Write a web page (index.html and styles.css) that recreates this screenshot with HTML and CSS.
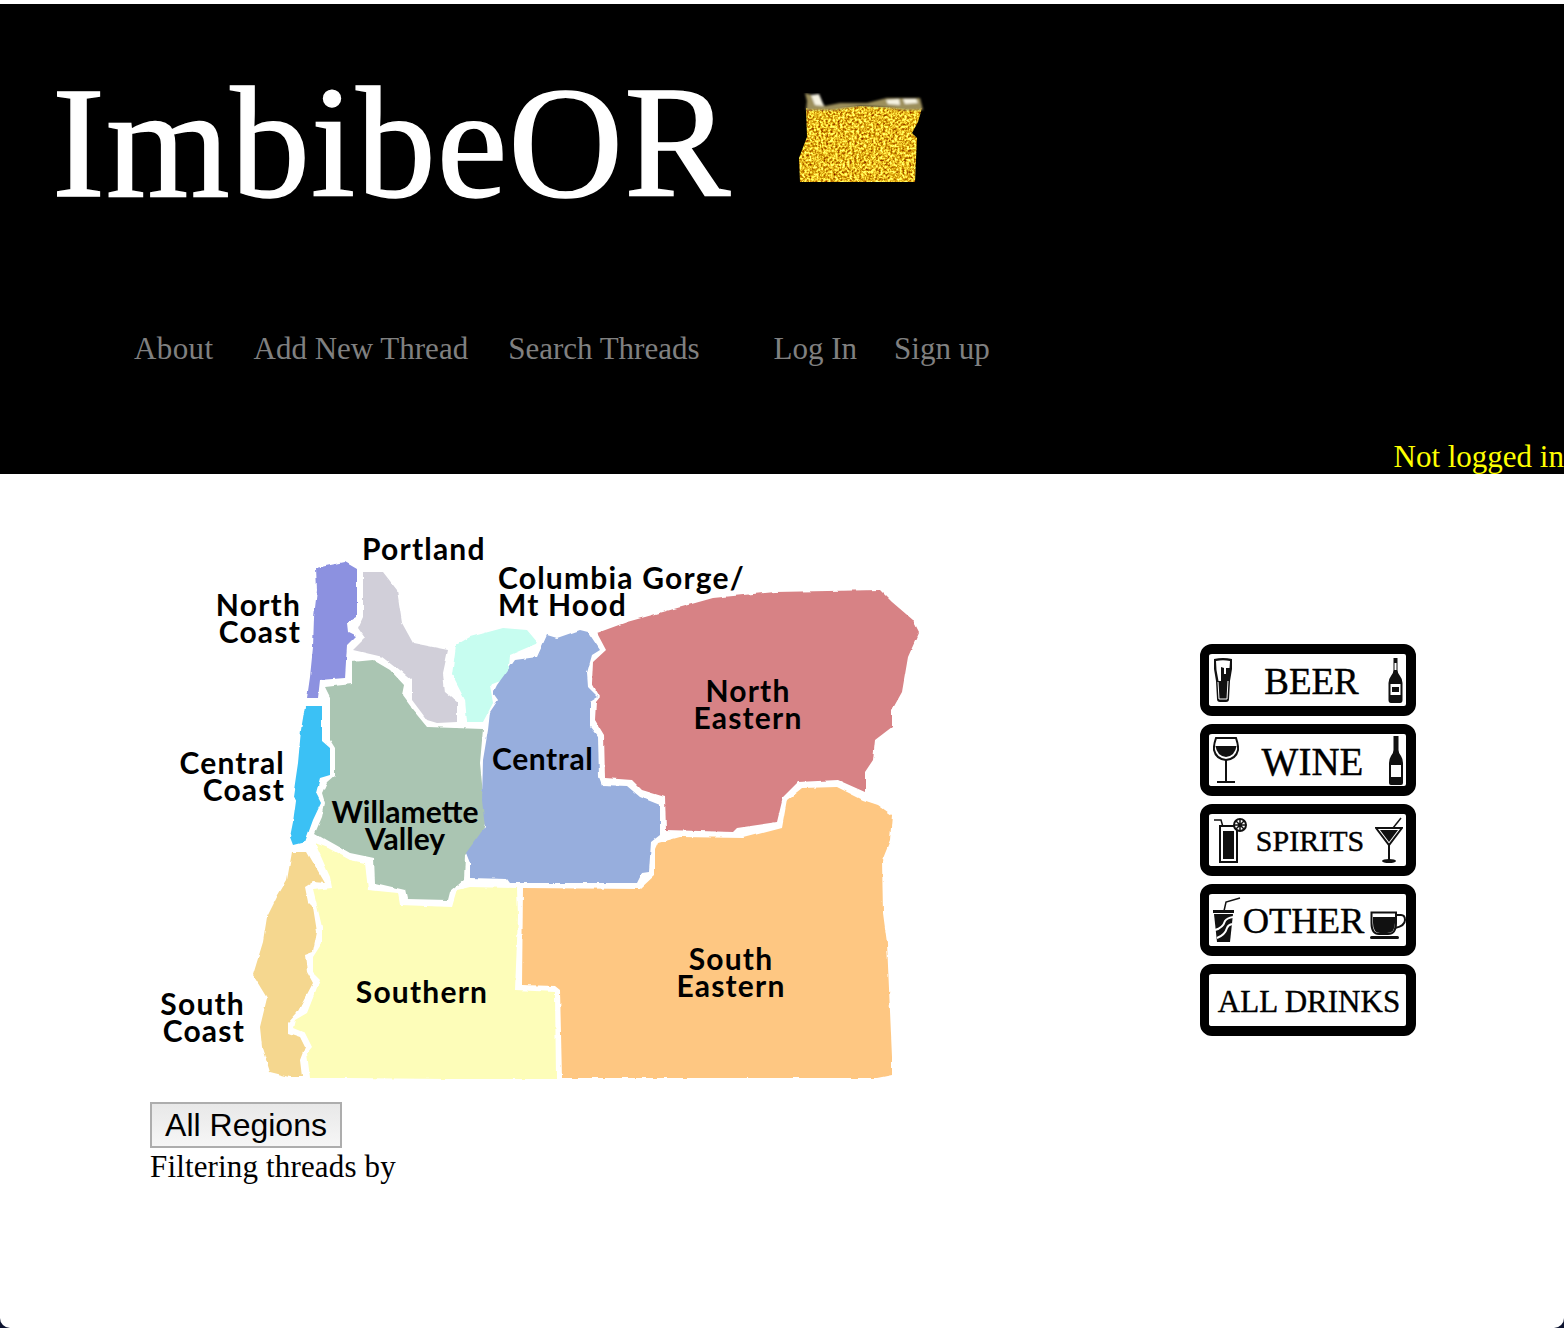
FILE: index.html
```html
<!DOCTYPE html>
<html lang="en">
<head>
<meta charset="utf-8">
<title>ImbibeOR</title>
<link rel="stylesheet" href="styles.css">
</head>
<body>
<div class="page">
  <header class="site-header">
    <div class="brand">
      <h1 class="brand-title">ImbibeOR</h1>
      <svg class="brand-logo" width="126" height="92" viewBox="799 93 126 92" aria-hidden="true">
        <defs>
          <filter id="beer" x="0" y="0" width="100%" height="100%" color-interpolation-filters="sRGB">
            <feTurbulence type="fractalNoise" baseFrequency="0.42" numOctaves="2" seed="4" result="n"/>
            <feColorMatrix in="n" type="matrix" values="1.1 0 0 0 0.36  1.7 0 0 0 -0.12  1.3 0 0 0 -0.52  0 0 0 0 1" result="c"/>
            <feComposite in="c" in2="SourceAlpha" operator="in"/>
          </filter>
          <filter id="soft" x="-10%" y="-30%" width="120%" height="160%">
            <feGaussianBlur stdDeviation="0.8"/>
          </filter>
        </defs>
        <path class="logo-fill" filter="url(#beer)" d="M806 108 L826 108 L860 106 L922 108 L918 122 L912 133 L917 138 L915 182 L800 182 L799 158 L807 137 Z"/>
        <g filter="url(#soft)">
          <path class="logo-foam-dark" d="M807 101 L805 93 L812 95 L825 106 L840 103 L867 103 L887 98 L920 98 L923 110 L905 110 L880 107 L860 106 L835 110 L806 110 Z"/>
          <path class="logo-foam" d="M811 95 L819 94 L824 106 L815 105 Z"/>
          <path class="logo-foam" d="M886 100 L899 99 L900 105 L888 104 Z"/>
          <path class="logo-foam" d="M903 99 L916 99 L918 103 L905 104 Z"/>
        </g>
      </svg>
    </div>
    <nav class="nav">
      <a class="nav-link nav-link-about">About</a>
      <a class="nav-link">Add New Thread</a>
      <a class="nav-link">Search Threads</a>
      <a class="nav-link nav-link-account">Log In</a>
      <a class="nav-link nav-link-signup">Sign up</a>
    </nav>
    <p class="login-status">Not logged in</p>
  </header>

  <main class="content">
    <section class="regions">
      <svg class="region-map" width="790" height="550" viewBox="150 530 790 550" role="img" aria-label="Oregon regions">
        <defs>
          <filter id="rough" x="-5%" y="-5%" width="110%" height="110%">
            <feTurbulence type="fractalNoise" baseFrequency="0.1" numOctaves="2" seed="7"/>
            <feDisplacementMap in="SourceGraphic" scale="3" xChannelSelector="R" yChannelSelector="G"/>
          </filter>
        </defs>
        <g filter="url(#rough)">
          <polygon class="r-ncoast" points="316,568 345,562 357,569 357,617 347,623 348,632 356,636 347,645 345,678 320,680 318,698 307,698 310,677 313,647 314,617 317,590"/>
          <polygon class="r-portland" points="363,572 383,572 397,590 402,623 413,643 448,650 443,673 445,692 457,702 457,722 437,723 427,720 412,700 412,680 400,670 383,657 353,650 365,638 358,628 363,617"/>
          <polygon class="r-gorge" points="456,645 470,637 503,628 527,630 538,643 510,655 508,678 490,685 493,703 483,722 467,722 465,700 452,675"/>
          <polygon class="r-willamette" points="352,662 373,660 390,670 404,685 402,695 413,710 427,727 483,729 480,763 484,805 487,817 480,840 465,855 464,880 450,892 448,900 407,899 405,890 375,883 374,858 350,853 327,840 315,833 322,817 325,803 322,793 327,782 335,775 335,748 330,740 330,697 325,687 352,684"/>
          <polygon class="r-ccoast" points="305,706 322,706 322,741 330,748 330,775 320,778 316,793 321,803 313,820 305,842 293,845 290,837 293,822 296,800 293,797 298,763 301,730"/>
          <polygon class="r-scoast" points="292,852 307,852 325,883 313,882 305,887 308,902 313,907 317,932 313,952 305,955 307,972 313,983 297,1013 288,1023 288,1033 300,1037 305,1047 300,1060 302,1077 290,1077 270,1072 262,1047 260,1027 267,998 253,975 263,942 267,917 278,895 287,880"/>
          <polygon class="r-southern" points="315,843 328,848 350,860 365,863 368,890 398,893 400,905 452,907 457,890 470,887 517,888 518,917 515,990 555,992 556,1079 448,1079 347,1078 310,1078 307,1053 312,1047 305,1033 293,1028 295,1020 307,1013 320,980 313,973 313,957 322,943 322,927 318,910 313,890 332,888 330,877"/>
          <polygon class="r-central" points="580,630 588,632 600,650 592,655 587,673 588,687 598,697 590,702 590,727 598,737 599,777 602,785 627,786 640,797 660,805 660,835 651,842 649,872 642,873 637,883 510,883 507,879 470,878 470,863 466,853 485,827 482,800 483,760 488,730 490,712 498,700 493,693 497,685 515,660 537,657 547,635 557,638"/>
          <polygon class="r-neast" points="597,633 627,622 663,612 713,598 775,592 880,590 892,602 913,620 919,632 908,657 902,692 892,710 892,727 875,740 873,760 865,772 865,792 838,780 798,782 783,797 777,822 737,828 733,832 666,830 665,797 642,790 632,780 605,778 604,735 595,720 596,702 600,697 592,683 593,662 606,650"/>
          <polygon class="r-seast" points="655,850 658,843 680,837 743,838 782,828 787,800 802,788 837,787 863,800 878,805 892,815 890,840 882,860 883,913 887,943 892,1057 892,1075 877,1078 562,1078 560,990 555,986 522,985 523,888 640,889 655,875"/>
        </g>
        <text class="map-label" x="362" y="560">Portland</text>
        <text class="map-label" x="498" y="589">Columbia Gorge/</text>
        <text class="map-label" x="498" y="616">Mt Hood</text>
        <text class="map-label label-end" x="301" y="616">North</text>
        <text class="map-label label-end" x="301" y="643">Coast</text>
        <text class="map-label label-end" x="285" y="774">Central</text>
        <text class="map-label label-end" x="285" y="801">Coast</text>
        <text class="map-label label-tight label-mid" x="405" y="823">Willamette</text>
        <text class="map-label label-tight label-mid" x="405" y="850">Valley</text>
        <text class="map-label label-central" x="492" y="770">Central</text>
        <text class="map-label label-mid" x="748" y="702">North</text>
        <text class="map-label label-mid" x="748" y="729">Eastern</text>
        <text class="map-label label-mid" x="731" y="970">South</text>
        <text class="map-label label-mid" x="731" y="997">Eastern</text>
        <text class="map-label label-mid" x="422" y="1003">Southern</text>
        <text class="map-label label-end" x="245" y="1015">South</text>
        <text class="map-label label-end" x="245" y="1042">Coast</text>
      </svg>
      <button class="region-button" type="button">All Regions</button>
      <p class="filter-note">Filtering threads by</p>
    </section>

    <aside class="drinks">
      <a class="drink">
        <svg class="icon" width="20" height="46" viewBox="0 0 20 46"><path class="ink" d="M1 2 Q10 0 19 2 L19 12 Q18 18 17 24 L16 42 Q16 45 13 45 H7 Q4 45 4 42 L3 24 Q2 18 1 12 Z"/><path class="paper" d="M3 4 Q10 2.5 17 4 L16.500 11 H13 V17 H11 V11 L8 10 V24 H5.500 L3.500 13 Z"/><path class="line-w" d="M5 25 L6 42 H14 L15 24"/></svg>
        <span class="drink-name name-beer">BEER</span>
        <svg class="icon" width="15" height="46" viewBox="0 0 15 46"><path class="ink" d="M5.500 1 H9.500 V13 Q9.500 16 12 19 Q14.500 22 14.500 26 V43 Q14.500 46 12 46 H3 Q.5 46 .5 43 V26 Q.5 22 3 19 Q5.500 16 5.500 13 Z"/><rect class="paper" x="6.500" y="6" width="2" height="7"/><rect class="paper" x="2.500" y="27" width="10" height="11"/><rect class="ink" x="4" y="30" width="7" height="5"/></svg>
      </a>
      <a class="drink">
        <svg class="icon" width="26" height="46" viewBox="0 0 26 46"><path class="outline" d="M3 1 H23 Q25.500 8 25 13 Q23 22 13 23 Q3 22 1 13 Q.5 8 3 1 Z"/><path class="ink" d="M2.500 9 H23.500 Q22 19 13 20 Q4 19 2.500 9 Z"/><rect class="ink" x="12" y="23" width="2" height="21"/><rect class="ink" x="4" y="44" width="18" height="2"/></svg>
        <span class="drink-name name-wine">WINE</span>
        <svg class="icon" width="14" height="49" viewBox="0 0 14 49"><path class="ink" d="M4.500 0 H9.500 V14 Q9.500 17 12 20 Q14 23 14 27 V47 Q14 49 12 49 H2 Q0 49 0 47 V27 Q0 23 2 20 Q4.500 17 4.500 14 Z"/><rect class="paper" x="2" y="29" width="10" height="12"/></svg>
      </a>
      <a class="drink">
        <svg class="icon" width="34" height="46" viewBox="0 0 34 46"><path class="stroke-thin" d="M1 3 H8 L10 10"/><rect class="outline" x="7" y="9" width="17" height="36"/><rect class="ink" x="10" y="14" width="11" height="28"/><circle class="outline" cx="27" cy="8" r="6"/><path class="stroke-thin" d="M27 2 V14 M21 8 H33 M23 4 L31 12 M31 4 L23 12"/></svg>
        <span class="drink-name name-spirits">SPIRITS</span>
        <svg class="icon" width="28" height="46" viewBox="0 0 28 46"><path class="outline" d="M1 11 H27 L14 28 Z"/><path class="ink" d="M5 13 H23 L14 25 Z"/><rect class="ink" x="13" y="27" width="2" height="16"/><ellipse class="ink" cx="14" cy="44" rx="7" ry="2"/><path class="stroke-thin" d="M18 11 L26 1"/></svg>
      </a>
      <a class="drink">
        <svg class="icon" width="28" height="46" viewBox="0 0 28 46"><path class="stroke-thin" d="M11 14 L13 5 L27 1"/><rect class="ink" x="0" y="13" width="21" height="3"/><path class="ink" d="M1 17 H20 L17 45 H4 Z"/><path class="wave" d="M2 33 Q10 31 12 24 Q14 21 20 20 M4 41 Q12 38 14 31 Q15 28 19 27"/></svg>
        <span class="drink-name name-other">OTHER</span>
        <svg class="icon icon-cup" width="36" height="29" viewBox="0 0 36 29"><path class="outline" d="M1.500 1.500 H26 V12 Q26 23 18 23 H9 Q1.500 23 1.500 12 Z"/><path class="ink" d="M3 6 H25 V12 Q25 22 17 22 H10 Q3 22 3 12 Z"/><path class="handle" d="M26 4 H31 Q35 4 35 9 Q35 15 25 17"/><rect class="ink" x="0" y="25" width="29" height="3" rx="1.500"/></svg>
      </a>
      <a class="drink drink-all">
        <span class="drink-name name-all">ALL DRINKS</span>
      </a>
    </aside>
  </main>
</div>
</body>
</html>
```

FILE: styles.css
```css
html {
  background: #0d1430;
}

body {
  margin: 0;
  background: #0d1430;
  font-family: "Liberation Serif", "Times New Roman", serif;
}

.page {
  box-sizing: border-box;
  height: 1328px;
  padding-top: 4px;
  background: #fff;
  border-radius: 0 0 10px 10px;
  overflow: hidden;
}

/* header */
.site-header {
  box-sizing: border-box;
  display: flex;
  flex-direction: column;
  height: 470px;
  padding-left: 57px;
  background: #000;
  overflow: hidden;
}

.brand {
  display: flex;
  align-items: flex-start;
  height: 230px;
}

.brand-title {
  margin: 48px 0 0 -5px;
  color: #fff;
  font-size: 159px;
  font-weight: 400;
  line-height: 180px;
  letter-spacing: 1px;
  -webkit-text-stroke: 1.5px #fff;
}

.brand-logo {
  flex: none;
  margin: 89px 0 0 68px;
}

.logo-fill {
  fill: #000;
}

.logo-foam-dark {
  fill: #9c8f5c;
}

.logo-foam {
  fill: #f6f3e2;
}

.nav {
  display: flex;
  gap: 40px;
  margin-top: 93px;
  padding-left: 77px;
}

.nav-link {
  color: #808080;
  font-size: 31px;
  line-height: 44px;
}

.nav-link-about {
  letter-spacing: 0.4px;
}

.nav-link-account {
  margin-left: 34px;
}

.nav-link-signup {
  margin-left: -3px;
}

.login-status {
  margin: auto 0 0;
  color: #ff0;
  font-size: 31px;
  line-height: 34px;
  text-align: right;
}

/* main */
.content {
  display: flex;
  justify-content: space-between;
  padding: 56px 148px 0 150px;
}

.regions {
  display: flex;
  flex-direction: column;
  align-items: flex-start;
}

.region-map {
  display: block;
}

.region-button {
  box-sizing: border-box;
  width: 192px;
  height: 46px;
  margin-top: 22px;
  padding: 0;
  color: #000;
  background: linear-gradient(#e8e8e8, #f6f6f6);
  border: 2px solid #adadad;
  font-family: "Liberation Sans", Arial, sans-serif;
  font-size: 32px;
  line-height: 40px;
}

.filter-note {
  margin: 0;
  color: #000;
  font-size: 31px;
  line-height: 38px;
  letter-spacing: 0.15px;
}

.r-ncoast { fill: #8c91e0; }
.r-portland { fill: #d1cfd9; }
.r-gorge { fill: #c7fdf0; }
.r-willamette { fill: #aac5b2; }
.r-ccoast { fill: #3bc1f5; }
.r-scoast { fill: #f5d78f; }
.r-southern { fill: #fdfdb9; }
.r-central { fill: #97aedd; }
.r-neast { fill: #d78285; }
.r-seast { fill: #fec782; }

.map-label {
  fill: #000;
  font-family: Lato, "Liberation Sans", sans-serif;
  font-size: 30px;
  font-weight: 700;
  letter-spacing: 1.2px;
}

.label-tight { letter-spacing: 0; }
.label-central { letter-spacing: 0.6px; }
.label-end { text-anchor: end; }
.label-mid { text-anchor: middle; }

/* drink buttons */
.drinks {
  display: flex;
  flex-direction: column;
  gap: 8px;
  width: 216px;
  margin-top: 114px;
}

.drink {
  box-sizing: border-box;
  display: flex;
  align-items: center;
  justify-content: space-between;
  height: 72px;
  padding: 0 3px 0 4px;
  color: #000;
  background: #fff;
  border: 10px solid #000;
  border-left-width: 9px;
  border-radius: 12px;
}

.drink-all {
  justify-content: center;
}

.drink-name {
  flex: none;
  padding-top: 2px;
  line-height: 1;
  -webkit-text-stroke: 0.4px #000;
}

.name-beer { font-size: 37px; margin-left: 2px; }
.name-wine { font-size: 39px; margin-left: -3px; }
.name-spirits { font-size: 30px; margin-left: -2px; }
.name-other { font-size: 36.500px; margin-left: -4px; }
.name-all { font-size: 31px; margin-left: 2px; }

.icon {
  flex: none;
  display: block;
}

.icon-cup {
  margin-right: -3px;
  margin-top: 10px;
}

.ink { fill: #111; }
.paper { fill: #fff; }
.outline { fill: #fff; stroke: #111; stroke-width: 2; }
.line-w { fill: none; stroke: #fff; stroke-width: 1; }
.stroke-thin { fill: none; stroke: #111; stroke-width: 1.500; }
.wave { fill: none; stroke: #fff; stroke-width: 2; }
.handle { fill: none; stroke: #111; stroke-width: 2; }
```
